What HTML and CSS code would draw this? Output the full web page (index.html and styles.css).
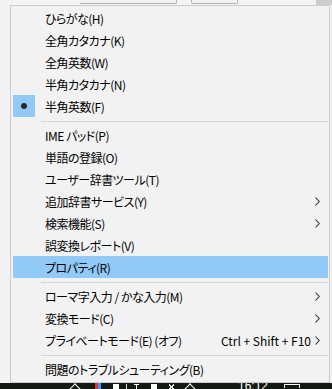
FILE: index.html
```html
<!DOCTYPE html>
<html lang="ja">
<head>
  <meta charset="UTF-8" />
  <title>IME メニュー</title>
  <link rel="stylesheet" href="styles.css">
</head>
<body>
  <div class="topstrip">
    <div class="btn-edge wide"></div>
    <div class="btn-edge small"></div>
    <div class="scroll-block"></div>
  </div>

  <div class="menu">
    <div class="item"><span class="check"></span><span class="label">ひらがな(H)</span></div>
    <div class="item"><span class="check"></span><span class="label">全角カタカナ(K)</span></div>
    <div class="item"><span class="check"></span><span class="label">全角英数(W)</span></div>
    <div class="item"><span class="check"></span><span class="label">半角カタカナ(N)</span></div>
    <div class="item"><span class="check on"><i class="dot"></i></span><span class="label">半角英数(F)</span></div>
    <div class="sep"></div>
    <div class="item"><span class="check"></span><span class="label">IME パッド(P)</span></div>
    <div class="item"><span class="check"></span><span class="label">単語の登録(O)</span></div>
    <div class="item"><span class="check"></span><span class="label">ユーザー辞書ツール(T)</span></div>
    <div class="item"><span class="check"></span><span class="label">追加辞書サービス(Y)</span>
      <span class="arrow"><svg width="5" height="9" viewBox="0 0 5 9"><polyline points="0.5,0.5 4.2,4.5 0.5,8.5" /></svg></span></div>
    <div class="item"><span class="check"></span><span class="label">検索機能(S)</span>
      <span class="arrow"><svg width="5" height="9" viewBox="0 0 5 9"><polyline points="0.5,0.5 4.2,4.5 0.5,8.5" /></svg></span></div>
    <div class="item"><span class="check"></span><span class="label">誤変換レポート(V)</span></div>
    <div class="item hover"><span class="check"></span><span class="label">プロパティ(R)</span></div>
    <div class="sep"></div>
    <div class="item"><span class="check"></span><span class="label">ローマ字入力 / かな入力(M)</span>
      <span class="arrow"><svg width="5" height="9" viewBox="0 0 5 9"><polyline points="0.5,0.5 4.2,4.5 0.5,8.5" /></svg></span></div>
    <div class="item"><span class="check"></span><span class="label">変換モード(C)</span>
      <span class="arrow"><svg width="5" height="9" viewBox="0 0 5 9"><polyline points="0.5,0.5 4.2,4.5 0.5,8.5" /></svg></span></div>
    <div class="item"><span class="check"></span><span class="label">プライベートモード(E) (オフ)</span>
      <span class="shortcut">Ctrl + Shift + F10</span>
      <span class="arrow"><svg width="5" height="9" viewBox="0 0 5 9"><polyline points="0.5,0.5 4.2,4.5 0.5,8.5" /></svg></span></div>
    <div class="sep"></div>
    <div class="item"><span class="check"></span><span class="label">問題のトラブルシューティング(B)</span></div>
  </div>

  <div class="taskbar">
    <span class="tray caret"></span>
    <span class="tray color"></span>
    <span class="tray square"></span>
    <span class="tray bar"></span>
    <span class="tray tee"></span>
    <span class="tray square"></span>
    <span class="tray cross"></span>
    <span class="tray caret small"></span>
    <span class="clock">16:12</span>
    <span class="tray note"></span>
  </div>
</body>
</html>
```

FILE: styles.css
```css
body {
  margin: 0;
  width: 332px;
  height: 389px;
  overflow: hidden;
  background: #f3f3f3;
  font-family: "Noto Sans CJK JP", "Noto Sans", sans-serif;
  font-size: 12px;
  color: #000;
}

/* things behind the menu, only their bottoms show */
.topstrip {
  display: flex;
  height: 5px;
}

.btn-edge {
  height: 3px;
  border-bottom: 1px solid #b4b4b4;
  border-right: 1px solid #b4b4b4;
  border-bottom-right-radius: 2px;
}

.btn-edge.wide {
  margin-left: 80px;
  width: 96px;
}

.btn-edge.small {
  margin-left: 14px;
  width: 45px;
  border-left: 1px solid #b4b4b4;
  border-bottom-left-radius: 2px;
}

.scroll-block {
  margin-left: auto;
  width: 16px;
  height: 5px;
  background: #cdcdcd;
}

.menu {
  box-sizing: border-box;
  width: 320px;
  margin-left: 10px;
  padding: 1px 1px 2px 2px;
  background: #f2f2f2;
  border: 1px solid #cccccc;
}

.item {
  display: flex;
  align-items: center;
  height: 22px;
  font-feature-settings: "palt";
}

.item.hover {
  background: #91c9f7;
}

.check {
  display: flex;
  align-items: center;
  justify-content: center;
  width: 22px;
  height: 22px;
  flex: none;
}

.check.on {
  background: #91c9f7;
}

.dot {
  width: 6px;
  height: 6px;
  border-radius: 50%;
  background: #2b2b2b;
}

.label {
  margin-left: 10px;
  white-space: nowrap;
  letter-spacing: -0.5px;
}

.shortcut {
  margin-left: auto;
  white-space: nowrap;
}

.arrow {
  display: flex;
  align-items: center;
  width: 17px;
  height: 22px;
  margin-left: auto;
  padding-left: 4px;
  box-sizing: border-box;
}

.shortcut + .arrow {
  margin-left: 0;
}

.arrow polyline {
  fill: none;
  stroke: #333;
  stroke-width: 1.1;
}

.sep {
  height: 1px;
  margin: 4px 0 2px 28px;
  background: #d5d5d5;
}

.taskbar {
  display: flex;
  align-items: flex-start;
  height: 6px;
  background: #131a13;
  overflow: hidden;
}

.tray {
  display: block;
  flex: none;
}

.tray.caret {
  margin-left: 71px;
  width: 7px;
  height: 7px;
  margin-top: 2px;
  border-left: 1px solid #fff;
  border-top: 1px solid #fff;
  transform: rotate(45deg);
}

.tray.caret.small {
  margin-left: 12px;
}

.tray.color {
  margin-left: 16px;
  width: 6px;
  height: 6px;
  background: linear-gradient(to right, #d33 0 50%, #39f 50%);
}

.tray.square {
  margin-left: 12px;
  width: 6px;
  height: 6px;
  margin-top: 1px;
  background: #fff;
}

.tray.bar {
  margin-left: 7px;
  width: 1px;
  height: 6px;
  margin-top: 1px;
  background: #ddd;
}

.tray.tee {
  margin-left: 7px;
  width: 5px;
  height: 5px;
  margin-top: 1px;
  border-top: 1px solid #fff;
  background: linear-gradient(to right, transparent 2px, #fff 2px 3px, transparent 3px);
}

.tray.cross {
  margin-left: 12px;
  width: 5px;
  height: 6px;
  margin-top: 1px;
  background: linear-gradient(45deg, transparent 40%, #eee 40% 60%, transparent 60%),
              linear-gradient(-45deg, transparent 40%, #eee 40% 60%, transparent 60%);
}

.clock {
  margin-left: 44px;
  margin-top: -4px;
  font-family: "Liberation Sans", sans-serif;
  font-size: 12px;
  line-height: 14px;
  color: #fff;
}

.tray.note {
  margin-left: 16px;
  width: 14px;
  height: 3px;
  margin-top: 1px;
  border: 1px solid #fff;
  border-bottom: none;
  background: #131a13;
}
```
